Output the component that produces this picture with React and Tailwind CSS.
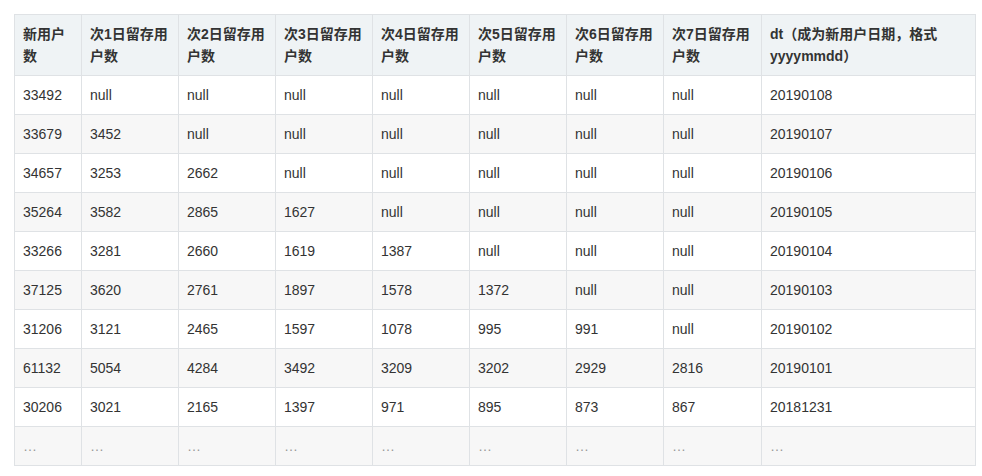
import React from "react";

const headers = [
  "新用户数",
  "次1日留存用户数",
  "次2日留存用户数",
  "次3日留存用户数",
  "次4日留存用户数",
  "次5日留存用户数",
  "次6日留存用户数",
  "次7日留存用户数",
  "dt（成为新用户日期，格式yyyymmdd）",
];

const rows = [
  ["33492", "null", "null", "null", "null", "null", "null", "null", "20190108"],
  ["33679", "3452", "null", "null", "null", "null", "null", "null", "20190107"],
  ["34657", "3253", "2662", "null", "null", "null", "null", "null", "20190106"],
  ["35264", "3582", "2865", "1627", "null", "null", "null", "null", "20190105"],
  ["33266", "3281", "2660", "1619", "1387", "null", "null", "null", "20190104"],
  ["37125", "3620", "2761", "1897", "1578", "1372", "null", "null", "20190103"],
  ["31206", "3121", "2465", "1597", "1078", "995", "991", "null", "20190102"],
  ["61132", "5054", "4284", "3492", "3209", "3202", "2929", "2816", "20190101"],
  ["30206", "3021", "2165", "1397", "971", "895", "873", "867", "20181231"],
  ["…", "…", "…", "…", "…", "…", "…", "…", "…"],
];

const widths = ["w-[67px]", "w-[97px]", "w-[97px]", "w-[97px]", "w-[97px]", "w-[97px]", "w-[97px]", "w-[98px]", "w-[214px]"];

export default function App() {
  return (
    <div
      className="bg-white w-[982px] h-[476px] pt-[14px] pl-[14px] text-[#333] text-[14px]"
      style={{ fontFamily: '"Liberation Sans", Arial, "Noto Sans CJK SC", sans-serif' }}
    >
      <table className="table-fixed border-collapse w-[962px]">
        <colgroup>
          {widths.map((w, i) => (
            <col key={i} className={w} />
          ))}
        </colgroup>
        <thead>
          <tr className="bg-[#eff3f5]">
            {headers.map((h, i) => (
              <th
                key={i}
                className="border border-[#dfe2e5] px-2 py-2 leading-[22px] text-left font-bold align-middle"
              >
                {i === 8 ? (
                  <>
                    dt（成为新用户日期，格式
                    <wbr />
                    yyyymmdd）
                  </>
                ) : (
                  h
                )}
              </th>
            ))}
          </tr>
        </thead>
        <tbody>
          {rows.map((r, ri) => (
            <tr key={ri} className={ri % 2 === 1 ? "bg-[#f7f7f7]" : "bg-white"}>
              {r.map((c, ci) => (
                <td
                  key={ci}
                  className={
                    "border border-[#dfe2e5] px-2 py-2 leading-[22px] text-left " +
                    (c === "…" ? "text-[#999]" : "")
                  }
                >
                  {c}
                </td>
              ))}
            </tr>
          ))}
        </tbody>
      </table>
    </div>
  );
}
